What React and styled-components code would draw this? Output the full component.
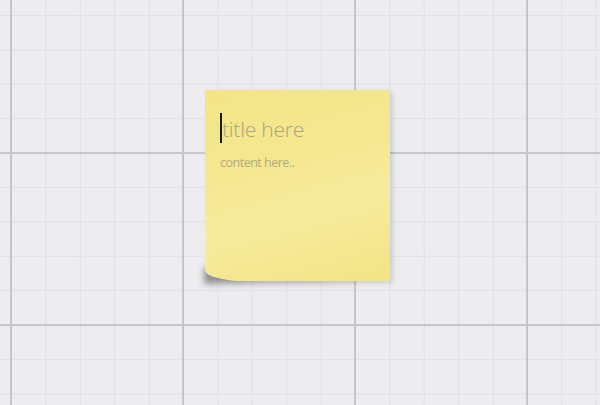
import React from "react";
import styled, { createGlobalStyle } from "styled-components";

const Global = createGlobalStyle`
  html, body { margin: 0; padding: 0; }
  body { width: 600px; height: 405px; overflow: hidden; }
`;

const Canvas = styled.div`
  position: relative;
  z-index: 0;
  width: 600px;
  height: 405px;
  background-color: #edecef;
  background-image:
    linear-gradient(to right, transparent 0, #c9c8cc 0.5px, #bcbbbf 1px, #c9c8cc 2px, transparent 2.5px),
    linear-gradient(to bottom, transparent 0, #c9c8cc 0.5px, #bcbbbf 1px, #c9c8cc 2px, transparent 2.5px),
    linear-gradient(to right, #e0dfe3 1px, transparent 1px),
    linear-gradient(to bottom, #e0dfe3 1px, transparent 1px);
  background-size: 172px 100%, 100% 172px, 34.4px 100%, 100% 34.4px;
  background-position: 10px 0, 0 152px, 11px 0, 0 15px;
  overflow: hidden;
`;

const Note = styled.div`
  position: absolute;
  left: ${(p) => p.x}px;
  top: ${(p) => p.y}px;
  width: 185px;
  height: 191px;
  box-sizing: border-box;
  padding: 23px 15px 0 15px;
  background: linear-gradient(165deg, #f3e486 0%, #f5e892 40%, #f7ec9e 62%, #f2e384 100%);
  border-bottom-left-radius: 40px 11px;
  box-shadow: 3px 2px 5px rgba(0, 0, 0, 0.13);
  font-family: "Open Sans", "Lato", sans-serif;

  &::before {
    content: "";
    position: absolute;
    left: -1px;
    bottom: -3px;
    width: 150px;
    height: 16px;
    background: linear-gradient(to right, rgba(80, 80, 82, 0.6), rgba(100, 100, 102, 0.3) 35%, rgba(120, 120, 122, 0.12));
    filter: blur(3px);
    z-index: -1;
  }
`;

const TitleRow = styled.div`
  display: flex;
  align-items: center;
  height: 30px;
`;

const Caret = styled.span`
  display: block;
  width: 2px;
  height: 30px;
  background: #1d1b10;
`;

const Title = styled.span`
  font-size: 21px;
  font-weight: 300;
  color: #aaa47e;
  line-height: 30px;
  letter-spacing: -0.2px;
  margin-top: 2px;
`;

const Content = styled.div`
  margin-top: 11px;
  font-size: 12.5px;
  font-weight: 400;
  color: #b1aa80;
  line-height: 17px;
  letter-spacing: -0.5px;
`;

export default function App() {
  return (
    <>
      <Global />
      <Canvas>
        <Note x={205} y={90}>
          <TitleRow>
            <Caret />
            <Title>title here</Title>
          </TitleRow>
          <Content>content here..</Content>
        </Note>
      </Canvas>
    </>
  );
}
